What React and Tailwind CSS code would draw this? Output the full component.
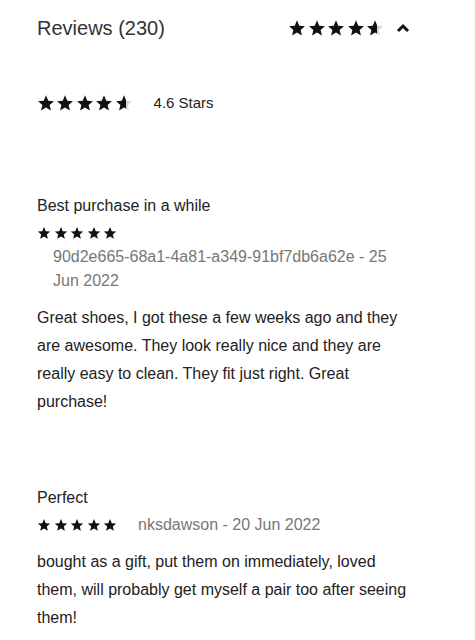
import React from "react";

const STAR = "M12 1.8l3 7.1 7.6.6-5.8 5 1.8 7.5L12 18l-6.6 4 1.8-7.5-5.8-5 7.6-.6z";

const Star = ({ size, fill = 1, id }) => (
  <svg width={size} height={size} viewBox="0 0 24 24">
    {fill < 1 && (
      <defs>
        <linearGradient id={id}>
          <stop offset={`${fill * 100}%`} stopColor="#111" />
          <stop offset={`${fill * 100}%`} stopColor="#d4d4d4" />
        </linearGradient>
      </defs>
    )}
    <path d={STAR} fill={fill < 1 ? `url(#${id})` : "#111"} />
  </svg>
);

const Stars = ({ rating, size, gap, id }) => (
  <div className={`flex items-center ${gap}`}>
    {[0, 1, 2, 3, 4].map((i) => (
      <Star key={i} size={size} fill={Math.max(0, Math.min(1, rating - i))} id={`${id}-${i}`} />
    ))}
  </div>
);

const reviews = [
  {
    title: "Best purchase in a while",
    author: "90d2e665-68a1-4a81-a349-91bf7db6a62e",
    date: "25 Jun 2022",
    body: "Great shoes, I got these a few weeks ago and they are awesome. They look really nice and they are really easy to clean. They fit just right. Great purchase!",
  },
  {
    title: "Perfect",
    author: "nksdawson",
    date: "20 Jun 2022",
    body: "bought as a gift, put them on immediately, loved them, will probably get myself a pair too after seeing them!",
  },
];

export default function App() {
  return (
    <div className="min-h-screen bg-white" style={{ fontFamily: '"Liberation Sans", Arial, sans-serif' }}>
      <div className="w-[411px] pl-[37px] pt-[16px]">
        {/* header */}
        <div className="flex items-center justify-between h-6">
          <h2 className="text-[20px] leading-6 text-[#333]">Reviews (230)</h2>
          <div className="flex items-center gap-[12px]">
            <Stars rating={4.6} size={18} gap="gap-[1.4px]" id="hd" />
            <svg width="14" height="10" viewBox="0 0 14 10" className="mr-[1px]">
              <polyline points="2,8 7,3 12,8" fill="none" stroke="#111" strokeWidth="3" />
            </svg>
          </div>
        </div>

        {/* average */}
        <div className="flex items-center mt-[51px] h-6">
          <Stars rating={4.6} size={18} gap="gap-[1.4px]" id="avg" />
          <span className="ml-[21px] text-[15px] text-[#222]">4.6 Stars</span>
        </div>

        {reviews.map((r, idx) => (
          <div key={idx} className={idx === 0 ? "mt-[79px]" : "mt-[70px]"}>
            <h3 className="text-[16px] leading-6 text-[#222]">{r.title}</h3>
            <div className="flex flex-wrap items-center mt-[3px]">
              <div className="h-6 flex items-center mr-[5px]">
                <Stars rating={5} size={14} gap="gap-[2.5px]" id={`r${idx}`} />
              </div>
              <div className="pl-[16px] text-[16px] leading-6 text-[#777]">
                {r.author} - {r.date}
              </div>
            </div>
            <p className="mt-[11px] text-[16px] leading-[28px] text-[#222]">{r.body}</p>
          </div>
        ))}
      </div>
    </div>
  );
}
